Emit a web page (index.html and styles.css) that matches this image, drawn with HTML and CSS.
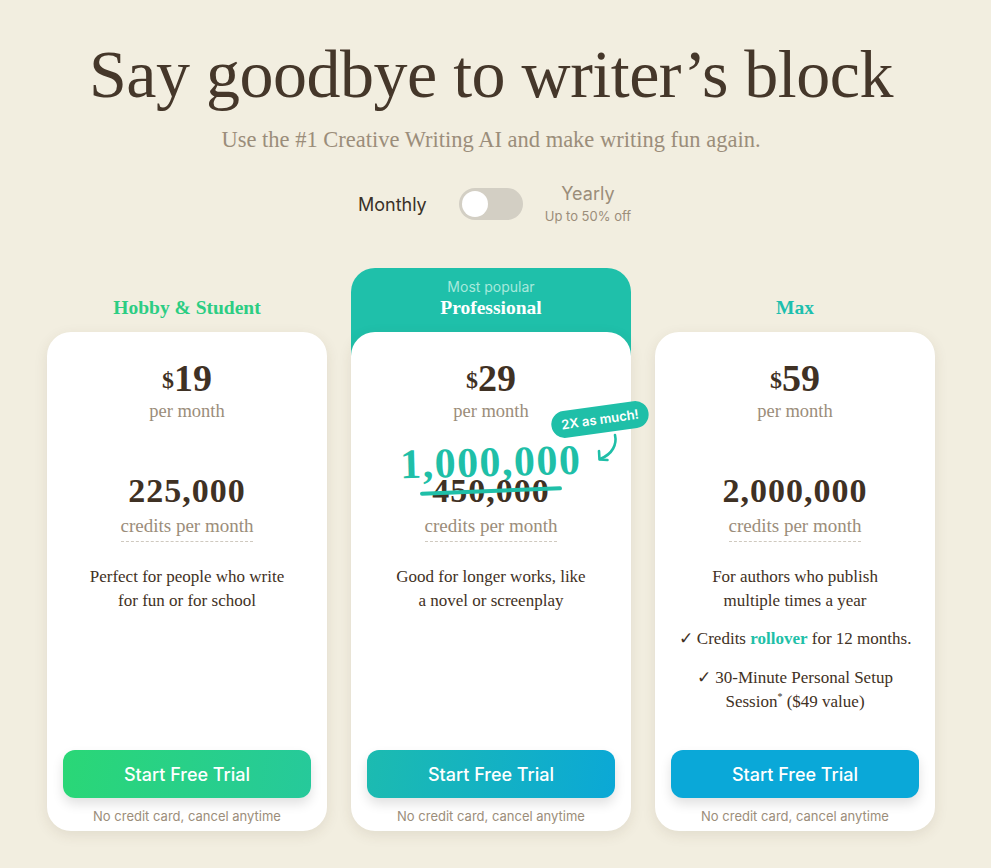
FILE: index.html
```html
<!DOCTYPE html>
<html>
<head>
<meta charset="utf-8">
<link rel="stylesheet" href="styles.css">
</head>
<body>
<main class="page">
  <h1 class="title">Say goodbye to writer’s block</h1>
  <p class="subtitle">Use the #1 Creative Writing AI and make writing fun again.</p>

  <div class="billing">
    <span class="billing-monthly">Monthly</span>
    <span class="switch"><span class="knob"></span></span>
    <span class="billing-yearly">
      <span class="yearly-label">Yearly</span>
      <span class="yearly-note">Up to 50% off</span>
    </span>
  </div>

  <section class="plans">
    <div class="plan">
      <div class="plan-head"><span class="plan-name green">Hobby &amp; Student</span></div>
      <div class="card">
        <div class="price"><span class="cur">$</span>19</div>
        <div class="per">per month</div>
        <div class="credits">225,000</div>
        <div class="credits-label"><span>credits per month</span></div>
        <p class="desc">Perfect for people who write<br>for fun or for school</p>
        <div class="spacer"></div>
        <button class="cta cta-green">Start Free Trial</button>
        <div class="fine">No credit card, cancel anytime</div>
      </div>
    </div>

    <div class="plan popular">
      <div class="plan-head popular-head">
        <span class="popular-tag">Most popular</span>
        <span class="plan-name white">Professional</span>
      </div>
      <div class="card">
        <div class="price"><span class="cur">$</span>29</div>
        <div class="per">per month</div>
        <div class="credits-double">
          <div class="credits-new">1,000,000</div>
          <div class="credits old">450,000<span class="strike"></span></div>
          <span class="badge">2X as much!</span>
          <svg class="arrow" width="30" height="34" viewBox="0 0 30 34">
            <path d="M22 3 C24 12 20 22 7 27" fill="none" stroke="#1fbfa8" stroke-width="2.6" stroke-linecap="round"/>
            <path d="M6 19 L6.5 27.5 L14.5 28" fill="none" stroke="#1fbfa8" stroke-width="2.6" stroke-linecap="round" stroke-linejoin="round"/>
          </svg>
        </div>
        <div class="credits-label"><span>credits per month</span></div>
        <p class="desc">Good for longer works, like<br>a novel or screenplay</p>
        <div class="spacer"></div>
        <button class="cta cta-teal">Start Free Trial</button>
        <div class="fine">No credit card, cancel anytime</div>
      </div>
    </div>

    <div class="plan">
      <div class="plan-head"><span class="plan-name teal">Max</span></div>
      <div class="card">
        <div class="price"><span class="cur">$</span>59</div>
        <div class="per">per month</div>
        <div class="credits">2,000,000</div>
        <div class="credits-label"><span>credits per month</span></div>
        <p class="desc">For authors who publish<br>multiple times a year</p>
        <p class="desc extra">✓ Credits <b class="hl">rollover</b> for 12 months.</p>
        <p class="desc extra2">✓ 30-Minute Personal Setup<br>Session<sup>*</sup> ($49 value)</p>
        <div class="spacer"></div>
        <button class="cta cta-blue">Start Free Trial</button>
        <div class="fine">No credit card, cancel anytime</div>
      </div>
    </div>
  </section>
</main>
</body>
</html>
```

FILE: styles.css
```css
html, body {
  margin: 0;
  padding: 0;
}
body {
  background: #f2eee0;
  font-family: "Liberation Serif", "Times New Roman", serif;
  color: #45372a;
  width: 991px;
  height: 868px;
  overflow: hidden;
}
.page {
  display: flex;
  flex-direction: column;
  align-items: center;
  padding: 34px 9px 0 0;
}
.title {
  margin: 0;
  font-weight: 400;
  font-size: 68px;
  line-height: 80px;
  color: #45372a;
  letter-spacing: -0.5px;
}
.subtitle {
  margin: 12px 0 0;
  font-size: 22.5px;
  line-height: 28px;
  color: #9b8d7a;
}
.billing {
  margin-top: 29px;
  margin-left: 7px;
  display: flex;
  align-items: center;
  font-family: Inter, "Liberation Sans", sans-serif;
}
.billing-monthly {
  font-size: 18px;
  color: #3a3128;
  margin-right: 32px;
}
.switch {
  width: 64px;
  height: 32px;
  border-radius: 16px;
  background: #d3cfc4;
  display: flex;
  align-items: center;
  padding: 0 3px;
  box-sizing: border-box;
}
.knob {
  width: 26px;
  height: 26px;
  border-radius: 50%;
  background: #fff;
}
.billing-yearly {
  display: flex;
  flex-direction: column;
  align-items: center;
  margin-left: 22px;
  color: #9b8d7a;
}
.yearly-label {
  font-size: 18px;
  line-height: 22px;
}
.yearly-note {
  font-size: 13px;
  line-height: 18px;
  margin-top: 2px;
}
.plans {
  margin-top: 43px;
  display: flex;
  gap: 24px;
  align-items: flex-end;
}
.plan {
  width: 280px;
  display: flex;
  flex-direction: column;
}
.popular {
  position: relative;
  z-index: 2;
}
.plan-head {
  height: 64px;
  display: flex;
  flex-direction: column;
  align-items: center;
  justify-content: flex-end;
  padding-bottom: 12px;
  box-sizing: border-box;
}
.plan-name {
  font-weight: 700;
  font-size: 19.5px;
  line-height: 24px;
}
.green { color: #2ccd83; }
.teal { color: #1cbfae; }
.white { color: #fff; }
.popular-head {
  background: #1fc0aa;
  border-radius: 24px 24px 0 0;
  padding-bottom: 36px;
  margin-bottom: -24px;
  height: 88px;
}
.popular-tag {
  font-family: Inter, "Liberation Sans", sans-serif;
  font-size: 14px;
  line-height: 18px;
  color: #a7e9dc;
}
.card {
  background: #fff;
  border-radius: 24px;
  height: 499px;
  box-shadow: 0 4px 14px rgba(80, 60, 30, 0.10);
  display: flex;
  flex-direction: column;
  align-items: center;
  padding: 27px 16px 7px;
  box-sizing: border-box;
  text-align: center;
  position: relative;
}
.price {
  font-weight: 700;
  font-size: 38px;
  line-height: 38px;
  color: #3f3124;
}
.cur {
  font-size: 24px;
  vertical-align: 3px;
}
.per {
  font-size: 18.5px;
  line-height: 22px;
  color: #9b8d7a;
  margin-top: 1px;
}
.credits {
  font-weight: 700;
  font-size: 34px;
  line-height: 36px;
  color: #3f3124;
  margin-top: 51px;
  letter-spacing: 1px;
}
.credits-double {
  position: relative;
  margin-top: 22px;
  display: flex;
  flex-direction: column;
  align-items: center;
  width: 100%;
}
.credits-new {
  font-weight: 700;
  font-size: 42px;
  line-height: 36px;
  color: #1fbfa8;
  transform: rotate(-1.5deg);
  letter-spacing: 1.5px;
}
.credits.old {
  margin-top: -7px;
  position: relative;
}
.strike {
  position: absolute;
  left: -12px;
  right: -12px;
  top: 16px;
  height: 4px;
  background: #1fbfa8;
  border-radius: 2px;
  transform: rotate(-2.2deg);
}
.badge {
  position: absolute;
  left: 184px;
  top: -38px;
  background: #1fbfa8;
  color: #fff;
  font-family: Inter, "Liberation Sans", sans-serif;
  font-size: 13px;
  font-weight: 600;
  line-height: 17px;
  padding: 5px 10px;
  border-radius: 14px;
  transform: rotate(-8deg);
  white-space: nowrap;
}
.arrow {
  position: absolute;
  left: 226px;
  top: -12px;
}
.credits-label {
  margin-top: 5px;
  font-size: 19px;
  line-height: 24px;
  color: #9b8d7a;
}
.credits-label span {
  display: inline-block;
  padding-bottom: 3px;
  border-bottom: 1.5px dashed #cfc9bf;
}
.desc {
  margin: 23px 0 0;
  font-size: 17px;
  line-height: 24px;
  color: #3f3124;
}
.desc.extra {
  margin-top: 14px;
}
.desc.extra2 {
  margin-top: 15px;
}
.hl {
  color: #1fbfa8;
}
sup {
  font-size: 10px;
  line-height: 0;
}
.spacer {
  flex: 1;
}
.cta {
  width: 248px;
  height: 48px;
  flex: none;
  border: none;
  border-radius: 12px;
  color: #fff;
  font-family: Inter, "Liberation Sans", sans-serif;
  font-size: 18px;
  font-weight: 500;
  box-shadow: 0 6px 12px rgba(0, 0, 0, 0.12);
}
.cta-green { background: linear-gradient(100deg, #2ad776, #26c99b); }
.cta-teal { background: linear-gradient(100deg, #1cbbb0, #0ba8d6); }
.cta-blue { background: #0aa8d8; }
.fine {
  margin-top: 10px;
  font-family: Inter, "Liberation Sans", sans-serif;
  font-size: 13px;
  line-height: 16px;
  color: #9b8d7a;
}
```
